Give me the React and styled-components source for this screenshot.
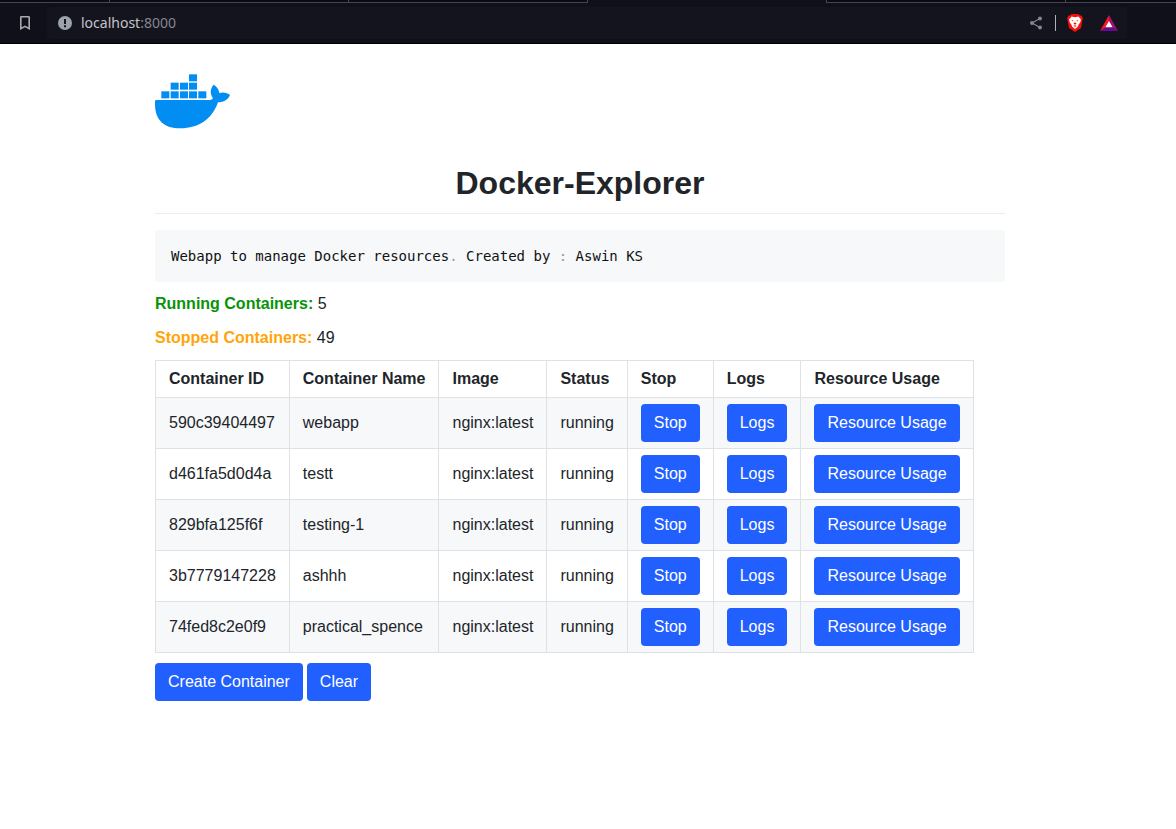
import React from "react";
import styled, { createGlobalStyle } from "styled-components";

const GlobalStyle = createGlobalStyle`
  *, *::before, *::after { box-sizing: border-box; }
  body {
    margin: 0;
    background: #ffffff;
    color: #212529;
    font-family: "Liberation Sans", Arial, sans-serif;
    font-size: 16px;
    line-height: 24px;
  }
`;

const Chrome = styled.header`
  display: flex;
  flex-direction: column;
  height: 44px;
  background: #10101a;
  border-bottom: 1px solid #000000;
`;

const TabStrip = styled.div`
  display: flex;
  height: 3px;
  flex: none;
`;

const TabEdge = styled.div`
  flex: ${(p) => (p.$fill ? "1" : "none")};
  width: ${(p) => p.$width}px;
  background: ${(p) => (p.$active ? "transparent" : "#0a0a10")};
  border-bottom: ${(p) => (p.$active ? "none" : "1px solid #45454e")};
  border-right: ${(p) => (p.$fill ? "none" : "1px solid #45454e")};
`;

const Toolbar = styled.div`
  display: flex;
  align-items: center;
  flex: 1;
  padding: 0 49px 0 17px;
  gap: 14px;
`;

const IconButton = styled.button`
  display: flex;
  padding: 0;
  border: 0;
  background: none;
  cursor: pointer;
`;

const AddressBar = styled.div`
  display: flex;
  align-items: center;
  flex: 1;
  height: 32px;
  padding: 0 8px 0 10px;
  border-radius: 4px;
  background: #14141e;
`;

const Address = styled.a`
  flex: 1;
  margin-left: 8px;
  color: #c3c4ca;
  font-family: "Noto Sans", "Open Sans", sans-serif;
  font-size: 14px;
  line-height: 20px;
  text-decoration: none;
`;

const Port = styled.span`
  color: #85868d;
`;

const Actions = styled.div`
  display: flex;
  align-items: center;
`;

const Divider = styled.span`
  width: 1px;
  height: 16px;
  margin: 0 11px 0 12px;
  background: #b0b0b8;
`;

const ActionGap = styled.span`
  width: 16px;
`;

const Page = styled.main`
  padding: 30px 16px 32px 0;
`;

const Content = styled.div`
  max-width: 850px;
  margin: 0 auto;
`;

const Logo = styled.svg`
  display: block;
  width: 75px;
  height: 55px;
`;

const Title = styled.h1`
  margin: 34px 0 16px;
  padding-bottom: 10px;
  border-bottom: 1px solid #eaecef;
  font-size: 32px;
  line-height: 40px;
  text-align: center;
`;

const Note = styled.pre`
  margin: 0 0 10px;
  padding: 16px;
  overflow: auto;
  border-radius: 3px;
  background: #f6f8fa;
  color: #111111;
  font-family: "DejaVu Sans Mono", monospace;
  font-size: 14px;
  line-height: 20px;
`;

const Punctuation = styled.span`
  color: #999999;
`;

const Summary = styled.p`
  margin: 0 0 10px;
`;

const SummaryLabel = styled.strong`
  color: ${(p) => p.$color};
`;

const Table = styled.table`
  margin-bottom: 10px;
  border-collapse: collapse;
`;

const Row = styled.tr`
  background: ${(p) => (p.$shaded ? "#f6f8fa" : "#ffffff")};
`;

const HeadCell = styled.th`
  padding: 6px 13px;
  border: 1px solid #dfe2e5;
  text-align: left;
`;

const Cell = styled.td`
  padding: 6px 13px;
  border: 1px solid #dfe2e5;
`;

const Button = styled.button`
  display: block;
  padding: 7px 13px;
  border: 0;
  border-radius: 4px;
  background: #225fff;
  color: #ffffff;
  font-family: inherit;
  font-size: 16px;
  line-height: 24px;
  white-space: nowrap;
  cursor: pointer;
`;

const ButtonRow = styled.div`
  display: flex;
  gap: 4px;
`;

const columns = ["Container ID", "Container Name", "Image", "Status", "Stop", "Logs", "Resource Usage"];

const containers = [
  { id: "590c39404497", name: "webapp" },
  { id: "d461fa5d0d4a", name: "testt" },
  { id: "829bfa125f6f", name: "testing-1" },
  { id: "3b7779147228", name: "ashhh" },
  { id: "74fed8c2e0f9", name: "practical_spence" },
];

const crates = [
  [132, 29], [77, 54], [105, 54], [132, 54],
  [49, 80], [77, 80], [105, 80], [132, 80], [160, 80],
];

function WhaleLogo() {
  return (
    <Logo viewBox="30 28 225 165" fill="#028df2" role="img" aria-label="Docker">
      {crates.map(([x, y]) => (
        <rect key={`${x}-${y}`} x={x} y={y} width="24" height="21" />
      ))}
      <path d="M30 110Q30 106 34 106H190C199 106 205 104 203 99C194 87 196 69 206 60C215 65 222 74 223 85C235 81 248 85 255 91C250 104 237 113 219 113C201 165 160 191 107 191C52 191 28 162 30 110Z" />
    </Logo>
  );
}

function BrowserBar() {
  return (
    <Chrome>
      <TabStrip>
        <TabEdge $width={110} />
        <TabEdge $width={239} />
        <TabEdge $width={239} />
        <TabEdge $width={239} $active />
        <TabEdge $width={239} />
        <TabEdge $fill />
      </TabStrip>
      <Toolbar>
        <IconButton aria-label="Bookmark this page">
          <svg width="16" height="16" viewBox="0 0 16 16" fill="none" stroke="#a9aab0" strokeWidth="1.6">
            <path d="M3.8 2.3Q3.8 1.8 4.3 1.8H11.7Q12.2 1.8 12.2 2.3V13.6L8 11.4L3.8 13.6Z" />
          </svg>
        </IconButton>
        <AddressBar>
          <IconButton aria-label="Site information">
            <svg width="16" height="16" viewBox="0 0 16 16">
              <circle cx="8" cy="8" r="7" fill="#9da3ab" />
              <path d="M7 4H9V9H7ZM7 10.3H9V12.2H7Z" fill="#14141e" />
            </svg>
          </IconButton>
          <Address href="http://localhost:8000">
            localhost<Port>:8000</Port>
          </Address>
          <Actions>
            <IconButton aria-label="Share">
              <svg width="14" height="14" viewBox="0 0 14 14">
                <path d="M11 2.5L3 7L11 11.5" fill="none" stroke="#85868d" strokeWidth="1.2" />
                <circle cx="11" cy="2.5" r="2" fill="#85868d" />
                <circle cx="3" cy="7" r="2" fill="#85868d" />
                <circle cx="11" cy="11.5" r="2" fill="#85868d" />
              </svg>
            </IconButton>
            <Divider />
            <IconButton aria-label="Shields">
              <svg width="16" height="18" viewBox="0 0 16 18">
                <path d="M4.5 0H11.5L13 1.5L14.5 1.4L16 4.5L15.4 6L14 14L8 18L2 14L.6 6L0 4.5L1.5 1.4L3 1.5Z" fill="#fb0d09" />
                <path d="M4.6 2.6L8 3.2L11.4 2.6L14 5.6L13.2 8.6L11.4 11L11 12.6L8 15L5 12.6L4.6 11L2.8 8.6L2 5.6Z" fill="#ffffff" />
                <path d="M4.4 6.2L6.6 6.6L6 7.6ZM11.6 6.2L9.4 6.6L10 7.6ZM7.6 8.4H8.4L9.6 9.8L8 10.8L6.4 9.8ZM6.2 11.9L8 11.3L9.8 11.9L8 12.8Z" fill="#fb0d09" />
              </svg>
            </IconButton>
            <ActionGap />
            <IconButton aria-label="Rewards">
              <svg width="20" height="18" viewBox="0 0 20 18">
                <path d="M10 1L1 17L10 11.5Z" fill="#fb1422" />
                <path d="M10 1L19 17L10 11.5Z" fill="#a3106a" />
                <path d="M1 17H19L10 11.5Z" fill="#670c91" />
                <path d="M10 7L6.4 13.3H13.6Z" fill="#ffffff" />
              </svg>
            </IconButton>
          </Actions>
        </AddressBar>
      </Toolbar>
    </Chrome>
  );
}

function ContainerTable() {
  return (
    <Table>
      <thead>
        <Row>
          {columns.map((name) => (
            <HeadCell key={name} scope="col">{name}</HeadCell>
          ))}
        </Row>
      </thead>
      <tbody>
        {containers.map((c, i) => (
          <Row key={c.id} $shaded={i % 2 === 0}>
            <Cell>{c.id}</Cell>
            <Cell>{c.name}</Cell>
            <Cell>nginx:latest</Cell>
            <Cell>running</Cell>
            <Cell><Button>Stop</Button></Cell>
            <Cell><Button>Logs</Button></Cell>
            <Cell><Button>Resource Usage</Button></Cell>
          </Row>
        ))}
      </tbody>
    </Table>
  );
}

export default function App() {
  return (
    <>
      <GlobalStyle />
      <BrowserBar />
      <Page>
        <Content>
          <WhaleLogo />
          <Title>Docker-Explorer</Title>
          <Note>
            Webapp to manage Docker resources<Punctuation>.</Punctuation> Created by <Punctuation>:</Punctuation> Aswin KS
          </Note>
          <Summary>
            <SummaryLabel $color="#089308">Running Containers:</SummaryLabel> 5
          </Summary>
          <Summary>
            <SummaryLabel $color="#ffa50a">Stopped Containers:</SummaryLabel> 49
          </Summary>
          <ContainerTable />
          <ButtonRow>
            <Button>Create Container</Button>
            <Button>Clear</Button>
          </ButtonRow>
        </Content>
      </Page>
    </>
  );
}
